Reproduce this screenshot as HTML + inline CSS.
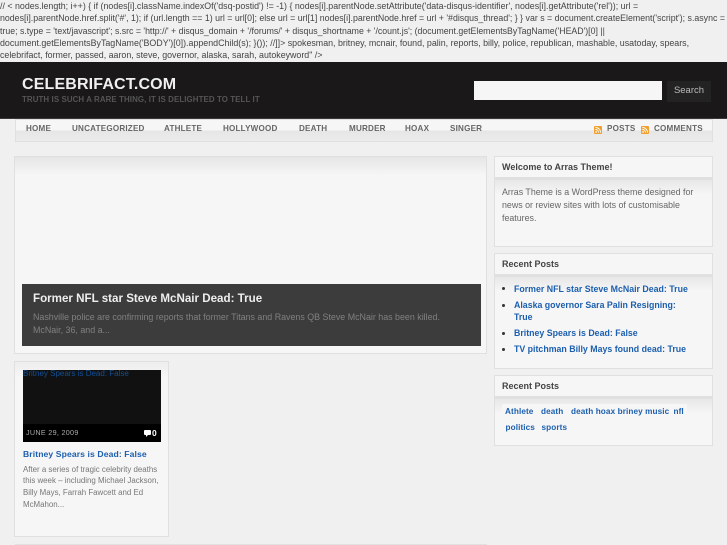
<!DOCTYPE html>
<html><head><meta charset="utf-8"><style>
html,body{margin:0;padding:0}
body{width:727px;height:545px;overflow:hidden;background:#f0f0f0;position:relative;font-family:"Liberation Sans",sans-serif}
#w{position:absolute;left:0;top:0;width:727px;height:545px;overflow:hidden;filter:blur(.3px)}
.a{position:absolute;white-space:nowrap}
.l{left:0;font-size:8.85px;line-height:12px;color:#444}
.box{position:absolute;background:#f6f6f6;border:1px solid #e0e0e0;box-sizing:border-box}
.nav{top:123px;font-size:8.1px;font-weight:bold;color:#666;line-height:12px;letter-spacing:.2px}
.wt{position:absolute;left:0;right:0;top:0;background:#f6f6f6;border-bottom:3px solid #e0e0e0;box-sizing:content-box}
.wt span{position:absolute;left:7px;font-size:9px;font-weight:bold;color:#444;white-space:nowrap}
.grad{position:absolute;left:0;right:0;height:14px;background:linear-gradient(#e8e8e8,#f6f6f6)}
.b{font-size:8.8px;font-weight:bold;color:#1c5fae;line-height:12px}
.t{font-size:8.2px;font-weight:bold;color:#1c5fae;line-height:12px;letter-spacing:.1px}
</style></head><body><div id="w">
<div class="a l" style="top:0">// &lt; nodes.length; i++) { if (nodes[i].className.indexOf('dsq-postid') != -1) { nodes[i].parentNode.setAttribute('data-disqus-identifier', nodes[i].getAttribute('rel')); url =</div>
<div class="a l" style="top:12.3px;font-size:8.8px">nodes[i].parentNode.href.split('#', 1); if (url.length == 1) url = url[0]; else url = url[1] nodes[i].parentNode.href = url + '#disqus_thread'; } } var s = document.createElement('script'); s.async =</div>
<div class="a l" style="top:24.6px;font-size:8.75px">true; s.type = 'text/javascript'; s.src = 'http://' + disqus_domain + '/forums/' + disqus_shortname + '/count.js'; (document.getElementsByTagName('HEAD')[0] ||</div>
<div class="a l" style="top:37px;font-size:8.87px">document.getElementsByTagName('BODY')[0]).appendChild(s); }()); //]]&gt; spokesman, britney, mcnair, found, palin, reports, billy, police, republican, mashable, usatoday, spears,</div>
<div class="a l" style="top:49.3px">celebrifact, former, passed, aaron, steve, governor, alaska, sarah, autokeyword" /&gt;</div>

<div class="a" style="left:0;top:62px;width:727px;height:56px;background:#1a1818;border-bottom:1px solid #3a3838"></div>
<div class="a" style="left:22px;top:75px;font-size:16px;line-height:19px;font-weight:bold;color:#f0f0f0;letter-spacing:.15px">CELEBRIFACT.COM</div>
<div class="a" style="left:22px;top:94px;font-size:7.9px;line-height:11px;font-weight:bold;color:#555;letter-spacing:.1px">TRUTH IS SUCH A RARE THING, IT IS DELIGHTED TO TELL IT</div>
<div class="a" style="left:474px;top:81px;width:188px;height:19px;background:#f6f6f6"></div>
<div class="a" style="left:667px;top:81px;width:44px;height:21px;background:#242323;color:#bbb;font-size:9.5px;line-height:20px;text-align:center">Search</div>

<div class="box" style="left:15px;top:119px;width:698px;height:23px;background:linear-gradient(#f6f6f6 0,#f6f6f6 50%,#e6e6e6 50%,#ececec 100%)"></div>
<div class="a nav" style="left:26px">HOME</div>
<div class="a nav" style="left:72px">UNCATEGORIZED</div>
<div class="a nav" style="left:164px">ATHLETE</div>
<div class="a nav" style="left:223px">HOLLYWOOD</div>
<div class="a nav" style="left:299px">DEATH</div>
<div class="a nav" style="left:349px">MURDER</div>
<div class="a nav" style="left:405px">HOAX</div>
<div class="a nav" style="left:450px">SINGER</div>
<svg class="a" style="left:594px;top:126px" width="8" height="8" viewBox="0 0 9 9"><rect width="9" height="9" rx="1" fill="#f0a030"/><circle cx="2.3" cy="6.7" r="1" fill="#fff"/><path d="M1.5 3.8a3.7 3.7 0 0 1 3.7 3.7M1.5 1.6a5.9 5.9 0 0 1 5.9 5.9" stroke="#fff" fill="none"/></svg>
<div class="a nav" style="left:607px">POSTS</div>
<svg class="a" style="left:641px;top:126px" width="8" height="8" viewBox="0 0 9 9"><rect width="9" height="9" rx="1" fill="#f0a030"/><circle cx="2.3" cy="6.7" r="1" fill="#fff"/><path d="M1.5 3.8a3.7 3.7 0 0 1 3.7 3.7M1.5 1.6a5.9 5.9 0 0 1 5.9 5.9" stroke="#fff" fill="none"/></svg>
<div class="a nav" style="left:654px">COMMENTS</div>

<div class="box" style="left:14px;top:156px;width:473px;height:198px;background:linear-gradient(#e6e6e6 0,#f6f6f6 18px)"></div>
<div class="a" style="left:22px;top:284px;width:459px;height:62px;background:#3c3c3c"></div>
<div class="a" style="left:33px;top:291px;font-size:11.6px;line-height:16px;font-weight:bold;color:#eee">Former NFL star Steve McNair Dead: True</div>
<div class="a" style="left:33px;top:311px;font-size:8.9px;line-height:13px;color:#808080;width:440px">Nashville police are confirming reports that former Titans and Ravens QB Steve McNair has been killed.<br>McNair, 36, and a...</div>

<div class="box" style="left:14px;top:361px;width:155px;height:176px;background:linear-gradient(#eee 0,#f6f6f6 16px)"></div>
<div class="a" style="left:23px;top:370px;width:138px;height:54px;background:#111"></div>
<div class="a" style="left:23px;top:424px;width:138px;height:18px;background:#000"></div>
<div class="a" style="left:23px;top:368px;font-size:8px;line-height:12px;color:#124f96">Britney Spears is Dead: False</div>
<div class="a" style="left:26px;top:427px;font-size:7.2px;line-height:12px;color:#aaa;letter-spacing:.3px">JUNE 29, 2009</div>
<svg class="a" style="left:144px;top:430px" width="7" height="7" viewBox="0 0 7 7"><path d="M1 0h5a1 1 0 0 1 1 1v3a1 1 0 0 1-1 1H4L2 7V5H1A1 1 0 0 1 0 4V1a1 1 0 0 1 1-1z" fill="#fff"/></svg>
<div class="a" style="left:152px;top:427px;font-size:8.5px;line-height:12px;font-weight:bold;color:#fff">0</div>
<div class="a" style="left:23px;top:448px;font-size:8.6px;line-height:12px;font-weight:bold;color:#1c5fae;letter-spacing:.1px">Britney Spears is Dead: False</div>
<div class="a" style="left:23px;top:463.5px;font-size:7.9px;line-height:11.7px;color:#777">After a series of tragic celebrity deaths<br>this week – including Michael Jackson,<br>Billy Mays, Farrah Fawcett and Ed<br>McMahon...</div>
<div class="a" style="left:15px;top:544px;width:472px;height:1px;background:#e0e0e0"></div>

<div class="box" style="left:494px;top:156px;width:219px;height:91px"><div class="wt" style="height:20px"><span style="top:4px;line-height:12px">Welcome to Arras Theme!</span></div><div class="grad" style="top:23px"></div></div>
<div class="a" style="left:502px;top:185.5px;font-size:8.85px;line-height:13.2px;color:#666">Arras Theme is a WordPress theme designed for<br>news or review sites with lots of customisable<br>features.</div>

<div class="box" style="left:494px;top:253px;width:219px;height:116px"><div class="wt" style="height:20px"><span style="top:4px;line-height:12px">Recent Posts</span></div><div class="grad" style="top:23px"></div></div>
<div class="a" style="left:502px;top:287px;width:3px;height:3px;border-radius:50%;background:#333"></div>
<div class="a b" style="left:514px;top:283px">Former NFL star Steve McNair Dead: True</div>
<div class="a" style="left:502px;top:304px;width:3px;height:3px;border-radius:50%;background:#333"></div>
<div class="a b" style="left:514px;top:299px">Alaska governor Sara Palin Resigning:</div>
<div class="a b" style="left:514px;top:311px">True</div>
<div class="a" style="left:502px;top:332px;width:3px;height:3px;border-radius:50%;background:#333"></div>
<div class="a b" style="left:514px;top:327px">Britney Spears is Dead: False</div>
<div class="a" style="left:502px;top:348px;width:3px;height:3px;border-radius:50%;background:#333"></div>
<div class="a b" style="left:514px;top:343px">TV pitchman Billy Mays found dead: True</div>

<div class="box" style="left:494px;top:375px;width:219px;height:71px"><div class="wt" style="height:20px"><span style="top:4px;line-height:12px">Recent Posts</span></div><div class="grad" style="top:23px"></div></div>
<div class="a" style="left:502px;top:404px;width:185px;height:16px;background:#f6f6f6"></div>
<div class="a t" style="left:505px;top:406px">Athlete</div>
<div class="a t" style="left:541px;top:406px">death</div>
<div class="a t" style="left:571px;top:406px">death hoax briney music</div>
<div class="a t" style="left:673.5px;top:406px">nfl</div>
<div class="a t" style="left:505.5px;top:422px">politics</div>
<div class="a t" style="left:541.5px;top:422px">sports</div>
</div></body></html>
